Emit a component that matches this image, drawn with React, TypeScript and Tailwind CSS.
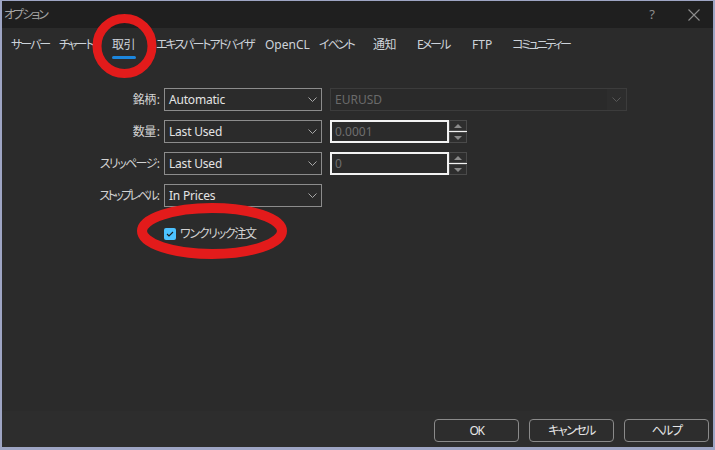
import React from 'react';

const tabs = [
    { label: 'サーバー', w: 'w-[48px]', t: 'tracking-[-2px]' },
    { label: 'チャート', w: 'w-[53px]', t: 'tracking-[-2px]' },
    { label: '取引', w: 'w-[44px]', t: 'tracking-[-0.5px]', active: true },
    { label: 'エキスパートアドバイザ', w: 'w-[109px]', t: 'tracking-[-2px]' },
    { label: 'OpenCL', w: 'w-[54px]', t: '' },
    { label: 'イベント', w: 'w-[54px]', t: 'tracking-[-2px]' },
    { label: '通知', w: 'w-[44px]', t: 'tracking-[-0.5px]' },
    { label: 'Eメール', w: 'w-[55px]', t: 'tracking-[-2px]' },
    { label: 'FTP', w: 'w-[40px]', t: '' },
    { label: 'コミュニティー', w: 'w-[70px]', t: 'tracking-[-2.3px]' },
];

const Chevron: React.FC<{ color?: string }> = ({ color = '#a8a8a8' }) => (
    <svg width="9" height="5" viewBox="0 0 9 5" fill="none">
        <path d="M0.5 0.5 L4.5 4.5 L8.5 0.5" stroke={color} strokeWidth="1" />
    </svg>
);

const Select: React.FC<{ value: string }> = ({ value }) => (
    <div className="w-[158px] h-[23px] border border-[#8c8c8c] bg-[#2b2b2b] flex items-center justify-between pl-[4px] pr-[4px] text-[#e4e4e4] tracking-[-0.2px]">
        <span>{value}</span>
        <Chevron />
    </div>
);

const NumberInput: React.FC<{ value: string }> = ({ value }) => (
    <div className="flex items-center">
        <div className="w-[119px] h-[23px] border-2 border-[#f2f2f2] bg-[#2b2b2b] flex items-center pl-[3px] text-[#6f6f6f]">
            {value}
        </div>
        <div className="w-[18px] h-[23px] flex flex-col">
            <div className="h-[11px] border border-[#4a4a4a] bg-[#2e2e2e] flex items-center justify-center">
                <div className="w-0 h-0 border-l-[4px] border-r-[4px] border-b-[4px] border-l-transparent border-r-transparent border-b-[#8a8a8a]" />
            </div>
            <div className="h-[1px] bg-[#f2f2f2]" />
            <div className="h-[11px] border border-[#4a4a4a] bg-[#2e2e2e] flex items-center justify-center">
                <div className="w-0 h-0 border-l-[4px] border-r-[4px] border-t-[4px] border-l-transparent border-r-transparent border-t-[#8a8a8a]" />
            </div>
        </div>
    </div>
);

const Label: React.FC<{ text: string; t?: string }> = ({ text, t = 'tracking-[-1.4px]' }) => (
    <div className="w-[158px] flex justify-end text-[#d2d2d2]">
        <span className={t}>{text}</span>
        <span className="ml-[1px]">:</span>
    </div>
);

export default function App() {
    return (
        <div
            className="relative w-[715px] h-[450px] bg-[#9ea5c4] pt-[1px] pl-[2px] pr-[2px] pb-[3px] flex flex-col text-[12px] [font-feature-settings:'palt']"
            style={{ fontFamily: '"Noto Sans", "Noto Sans CJK JP", sans-serif' }}
        >
            <div className="flex-1 flex flex-col bg-[#2b2b2b]">
                {/* title bar */}
                <div className="h-[27px] bg-[#1f1f1f] flex items-center justify-between pl-[2px] text-[#a3a3a3]">
                    <span className="tracking-[-2px]">オプション</span>
                    <div className="flex items-center">
                        <span className="text-[13px] text-[#8e8e8e] mr-[33px]">?</span>
                        <svg width="12" height="12" viewBox="0 0 12 12" className="mr-[13px]">
                            <path d="M0.5 0.5 L11.5 11.5 M11.5 0.5 L0.5 11.5" stroke="#8e8e8e" strokeWidth="1.1" />
                        </svg>
                    </div>
                </div>

                {/* tabs */}
                <div className="flex pl-[9px] pt-[9px] h-[34px]">
                    {tabs.map((t) => (
                        <div key={t.label} className={`${t.w} flex flex-col items-start`}>
                            <span className={`${t.t} h-[16px] leading-[16px] text-[#cdd3da] whitespace-nowrap`}>{t.label}</span>
                            {t.active && <div className="mt-[3px] w-[24px] h-[2.5px] rounded-full bg-[#1c86dd]" />}
                        </div>
                    ))}
                </div>

                {/* form */}
                <div className="flex-1 flex flex-col pt-[26px]">
                    <div className="flex flex-col gap-[9px]">
                        <div className="flex items-center gap-[4px]">
                            <Label text="銘柄" t="tracking-[-0.5px]" />
                            <Select value="Automatic" />
                            <div className="ml-[4px] w-[297px] h-[23px] border border-[#3c3c3c] bg-[#2d2d2d] flex items-center">
                                <div className="flex-1 h-full pl-[4px] flex items-center bg-[#2a2a2a] text-[#6a6a6a]">EURUSD</div>
                                <div className="w-[19px] flex justify-center">
                                    <Chevron color="#585858" />
                                </div>
                            </div>
                        </div>
                        <div className="flex items-center gap-[4px]">
                            <Label text="数量" t="tracking-[-0.5px]" />
                            <Select value="Last Used" />
                            <div className="ml-[4px]">
                                <NumberInput value="0.0001" />
                            </div>
                        </div>
                        <div className="flex items-center gap-[4px]">
                            <Label text="スリッページ" t="tracking-[-1.6px]" />
                            <Select value="Last Used" />
                            <div className="ml-[4px]">
                                <NumberInput value="0" />
                            </div>
                        </div>
                        <div className="flex items-center gap-[4px]">
                            <Label text="ストップレベル" t="tracking-[-2.6px]" />
                            <Select value="In Prices" />
                        </div>
                    </div>

                    <div className="flex items-center gap-[4px] mt-[18px] pl-[162px]">
                        <div className="w-[12px] h-[12px] rounded-[2px] bg-[#4cc2ff] flex items-center justify-center">
                            <svg width="8" height="6" viewBox="0 0 8 6" fill="none">
                                <path d="M1 3 L3 5 L7 1" stroke="#1b1b1b" strokeWidth="1.1" />
                            </svg>
                        </div>
                        <span className="text-[#d2d2d2] tracking-[-1.3px]">ワンクリック注文</span>
                    </div>
                </div>

                {/* footer */}
                <div className="h-[36px] bg-[#2d2d2d] flex justify-end items-start pt-[8px] pr-[4px] gap-[10px]">
                    {['OK', 'キャンセル', 'ヘルプ'].map((b) => (
                        <button
                            key={b}
                            className="w-[85px] h-[23px] rounded-[4px] border border-[#8a8a8a] bg-[#2d2d2d] text-[#e6e6e6] flex items-center justify-center tracking-[-1.5px]"
                        >
                            {b}
                        </button>
                    ))}
                </div>
            </div>

            {/* red annotation marks */}
            <svg className="absolute inset-0 pointer-events-none" width="715" height="450">
                <ellipse cx="124.5" cy="46" rx="27.5" ry="27.5" fill="none" stroke="#e31b1b" strokeWidth="9" />
                <ellipse cx="212" cy="231" rx="70" ry="23" fill="none" stroke="#e31b1b" strokeWidth="10" />
            </svg>
        </div>
    );
}
